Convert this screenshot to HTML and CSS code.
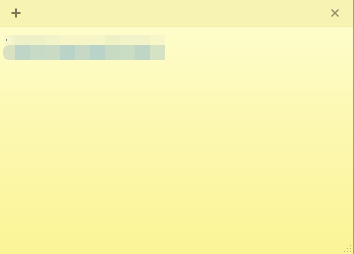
FILE: index.html
```html
<!DOCTYPE html>
<html>
<head>
<meta charset="utf-8">
<link rel="stylesheet" href="styles.css">
</head>
<body>
<div class="note">
  <div class="titlebar">
    <svg class="icon" width="10" height="10" viewBox="0 0 10 10"><path d="M5 0.5V9.5M0.5 5H9.5" stroke="#7c7853" stroke-width="2"/></svg>
    <svg class="icon" width="10" height="10" viewBox="0 0 10 10"><path d="M1.5 1.5L8.5 8.5M8.5 1.5L1.5 8.5" stroke="#8f8b66" stroke-width="1.4"/></svg>
  </div>
  <div class="body">
    <div class="mosaic">
      <span class="dot"></span>
      <div class="row top">
        <i></i><i></i><i></i><i></i><i></i><i></i><i></i><i></i><i></i><i></i><i></i>
      </div>
      <div class="row bottom">
        <i></i><i></i><i></i><i></i><i></i><i></i><i></i><i></i><i></i><i></i><i></i>
      </div>
    </div>
    <div class="spacer"></div>
    <svg class="grip" width="8" height="8" viewBox="0 0 8 8">
      <rect x="6" y="0" width="1" height="1" fill="#b8b070"/>
      <rect x="3" y="3" width="1" height="1" fill="#b8b070"/><rect x="6" y="3" width="1" height="1" fill="#b8b070"/>
      <rect x="0" y="6" width="1" height="1" fill="#b8b070"/><rect x="3" y="6" width="1" height="1" fill="#b8b070"/><rect x="6" y="6" width="1" height="1" fill="#b8b070"/>
    </svg>
  </div>
</div>
</body>
</html>
```
FILE: styles.css
```css
html, body { margin: 0; padding: 0; }
body { width: 354px; height: 254px; overflow: hidden; font-family: "Liberation Sans", sans-serif; }
.note {
  width: 354px; height: 254px; display: flex; flex-direction: column;
  border-right: 1px solid #a8a070; box-sizing: border-box;
}
.titlebar {
  height: 27px; flex: none; background: #f7f3b3;
  display: flex; align-items: center; justify-content: space-between;
  padding: 0 13px 0 11px; box-sizing: border-box;
  border-bottom: 1px solid #f3eeaa;
}
.icon { display: block; }
.body {
  flex: 1; background: linear-gradient(#fefdca, #fcf8b0 45%, #fbf497);
  display: flex; flex-direction: column; padding: 8px 0 0 3px; position: relative;
}
.mosaic { position: relative; display: flex; flex-direction: column; }
.dot { position: absolute; left: 3px; top: 4px; width: 1px; height: 2px; background: #7c8a8a; }
.row { display: flex; }
.row i { display: block; width: 15px; flex: none; }
.row i:first-child { width: 12px; }
.top { height: 10px; }
.bottom { height: 15px; }
.top i:nth-child(1) { background: linear-gradient(90deg, #fbfbca, #f0f2c9); border-radius: 6px 0 0 0; }
.top i:nth-child(2) { background: #eef1c8; }
.top i:nth-child(3) { background: #eef1c8; }
.top i:nth-child(4) { background: #f1f3c9; }
.top i:nth-child(5) { background: #f5f5c8; }
.top i:nth-child(6) { background: #f5f5c8; }
.top i:nth-child(7) { background: #f5f5c8; }
.top i:nth-child(8) { background: #eef1c6; }
.top i:nth-child(9) { background: #f2f3c8; }
.top i:nth-child(10) { background: #f2f3c8; }
.top i:nth-child(11) { background: #f6f6c9; }
.bottom i:nth-child(1) { background: #d8e2c3; border-radius: 6px 0 0 6px; }
.bottom i:nth-child(2) { background: #bed5c8; }
.bottom i:nth-child(3) { background: #c6dac6; }
.bottom i:nth-child(4) { background: #c9dbc4; }
.bottom i:nth-child(5) { background: #bad3c9; }
.bottom i:nth-child(6) { background: #c5d9c6; }
.bottom i:nth-child(7) { background: #bad3c9; }
.bottom i:nth-child(8) { background: #c6dac4; }
.bottom i:nth-child(9) { background: #cadcc3; }
.bottom i:nth-child(10) { background: #bfd6c6; }
.bottom i:nth-child(11) { background: #d5e2c3; }
.spacer { flex: 1; }
.grip { position: absolute; right: 1px; bottom: 1px; }
```
